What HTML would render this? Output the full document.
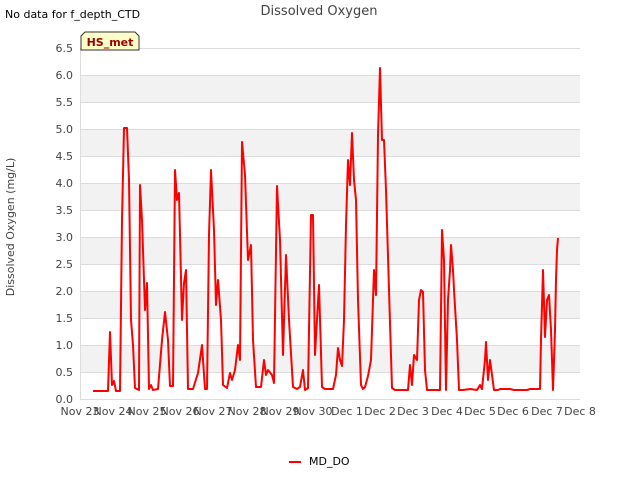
<!DOCTYPE html>
<html><head><style>
body{margin:0;background:#fff;width:640px;height:480px;overflow:hidden;font-family:"DejaVu Sans","Liberation Sans",sans-serif}
</style></head><body>
<svg width="640" height="480" xmlns="http://www.w3.org/2000/svg" font-family="DejaVu Sans, Liberation Sans, sans-serif">
<rect width="640" height="480" fill="#fff"/>
<g fill="#f2f2f2">
<rect x="80" y="75" width="500" height="27"/>
<rect x="80" y="129" width="500" height="27"/>
<rect x="80" y="183" width="500" height="27"/>
<rect x="80" y="237" width="500" height="27"/>
<rect x="80" y="291" width="500" height="27"/>
<rect x="80" y="345" width="500" height="27"/>
</g>
<g stroke="#dcdcdc" stroke-width="1">
<line x1="80" x2="580" y1="48.5" y2="48.5"/><line x1="80" x2="580" y1="75.5" y2="75.5"/>
<line x1="80" x2="580" y1="102.5" y2="102.5"/><line x1="80" x2="580" y1="129.5" y2="129.5"/>
<line x1="80" x2="580" y1="156.5" y2="156.5"/><line x1="80" x2="580" y1="183.5" y2="183.5"/>
<line x1="80" x2="580" y1="210.5" y2="210.5"/><line x1="80" x2="580" y1="237.5" y2="237.5"/>
<line x1="80" x2="580" y1="264.5" y2="264.5"/><line x1="80" x2="580" y1="291.5" y2="291.5"/>
<line x1="80" x2="580" y1="318.5" y2="318.5"/><line x1="80" x2="580" y1="345.5" y2="345.5"/>
<line x1="80" x2="580" y1="372.5" y2="372.5"/><line x1="80" x2="580" y1="399.5" y2="399.5"/>
<line x1="80.5" x2="80.5" y1="48" y2="400"/>
</g>
<g font-size="11" fill="#444" text-anchor="end">
<text x="73" y="52">6.5</text><text x="73" y="79">6.0</text><text x="73" y="106">5.5</text>
<text x="73" y="133">5.0</text><text x="73" y="160">4.5</text><text x="73" y="187">4.0</text>
<text x="73" y="214">3.5</text><text x="73" y="241">3.0</text><text x="73" y="268">2.5</text>
<text x="73" y="295">2.0</text><text x="73" y="322">1.5</text><text x="73" y="349">1.0</text>
<text x="73" y="376">0.5</text><text x="73" y="403">0.0</text>
</g>
<g font-size="11" fill="#444" text-anchor="middle">
<text x="80" y="415">Nov 23</text><text x="113" y="415">Nov 24</text><text x="147" y="415">Nov 25</text>
<text x="180" y="415">Nov 26</text><text x="213" y="415">Nov 27</text><text x="247" y="415">Nov 28</text>
<text x="280" y="415">Nov 29</text><text x="313" y="415">Nov 30</text><text x="347" y="415">Dec 1</text>
<text x="380" y="415">Dec 2</text><text x="413" y="415">Dec 3</text><text x="447" y="415">Dec 4</text>
<text x="480" y="415">Dec 5</text><text x="513" y="415">Dec 6</text><text x="547" y="415">Dec 7</text>
<text x="580" y="415">Dec 8</text>
</g>
<text x="14" y="227" font-size="11" fill="#444" text-anchor="middle" transform="rotate(-90 14 227)">Dissolved Oxygen (mg/L)</text>
<text x="319" y="15" font-size="13" fill="#444" text-anchor="middle">Dissolved Oxygen</text>
<text x="5" y="18" font-size="11" fill="#000">No data for f_depth_CTD</text>
<path d="M85 32 L135 32 L139 36 L139 50 L81 50 L81 36 Z" fill="#ffffc8" stroke="#333" stroke-width="1"/>
<text x="110" y="46" font-size="11" font-weight="bold" fill="#990000" text-anchor="middle">HS_met</text>
<polyline fill="none" stroke="#ff0000" stroke-width="2" stroke-linejoin="round" points="93,391 108,391 110,332 112,385 114,381 116,391 120,391 122,220 124,128 127,128 129,180 131,320 133,345 135,388 139,390 140,185 142,220 145,310 147,283 149,389 151,385 153,390 158,389 162,340 165,312 168,340 170,386 173,386 175,170 177,200 179,193 182,320 184,283 186,270 188,389 193,389 198,373 202,345 205,389 207,389 209,235 211,170 214,230 216,305 218,280 221,320 223,385 227,388 230,373 232,380 235,370 238,345 240,360 242,142 245,175 248,260 251,245 253,340 256,387 261,387 264,360 266,375 268,370 272,375 274,383 277,186 280,240 283,355 286,255 289,320 293,387 297,389 300,387 303,370 305,390 308,388 311,215 313,215 315,355 319,285 322,387 325,389 333,389 336,375 338,348 340,360 342,366 344,320 346,225 348,160 350,185 352,133 354,180 356,200 358,300 361,385 363,389 365,387 368,376 371,360 374,270 376,295 378,135 380,68 382,140 384,140 386,190 389,290 392,388 395,390 408,390 410,365 412,385 414,355 417,360 419,300 421,290 423,292 425,370 427,390 440,390 442,230 444,260 446,390 448,300 450,270 451,245 453,270 454,290 457,340 459,390 463,390 470,389 477,390 480,385 482,389 485,360 486,342 488,380 490,360 492,375 494,390 498,390 500,389 510,389 514,390 527,390 530,389 540,389 541,340 543,270 545,337 547,300 549,295 551,330 553,390 555,330 556,280 557,250 558,238"/>
<line x1="289" x2="301" y1="462" y2="462" stroke="#ff0000" stroke-width="2"/>
<text x="309" y="465" font-size="11" fill="#000">MD_DO</text>
</svg>
</body></html>
